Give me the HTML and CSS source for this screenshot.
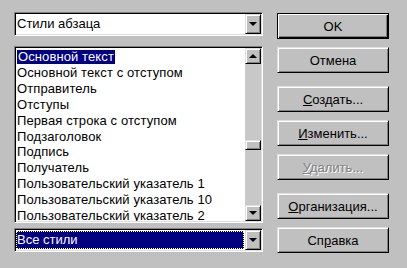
FILE: index.html
```html
<!DOCTYPE html>
<html lang="ru">

<head>
  <meta charset="UTF-8">
  <meta name="viewport" content="width=device-width, initial-scale=1.0">
  <title>Стили</title>
  <link rel="stylesheet" href="styles.css">
</head>

<body>

  <div class="dialog">
    <div class="leftCol">
      <div class="combo">
        <div class="comboText">Стили абзаца</div>
        <div class="dropBtn"><span class="arrowDown"></span></div>
      </div>

      <div class="listBox">
        <ul class="items">
          <li><span class="sel">Основной текст</span></li>
          <li>Основной текст с отступом</li>
          <li>Отправитель</li>
          <li>Отступы</li>
          <li>Первая строка с отступом</li>
          <li>Подзаголовок</li>
          <li>Подпись</li>
          <li>Получатель</li>
          <li>Пользовательский указатель 1</li>
          <li>Пользовательский указатель 10</li>
          <li>Пользовательский указатель 2</li>
        </ul>
        <div class="scrollBar">
          <div class="sbBtn"><span class="arrowUp"></span></div>
          <div class="track">
            <div class="thumb"></div>
          </div>
          <div class="sbBtn"><span class="arrowDown"></span></div>
        </div>
      </div>

      <div class="combo">
        <div class="comboText focused">Все стили</div>
        <div class="dropBtn"><span class="arrowDown"></span></div>
      </div>
    </div>

    <div class="buttons">
      <button class="btn default">OK</button>
      <button class="btn">Отмена</button>
      <button class="btn group"><u>С</u>оздать...</button>
      <button class="btn"><u>И</u>зменить...</button>
      <button class="btn disabled"><u>У</u>далить...</button>
      <button class="btn group"><u>О</u>рганизация...</button>
      <button class="btn"><span>Сп<u>р</u>авка</span></button>
    </div>
  </div>

</body>

</html>
```

FILE: styles.css
```css
body {
  margin: 0;
  width: 407px;
  height: 268px;
  overflow: hidden;
  background-color: #c0c0c0;
  font-family: "Liberation Sans", Arial, sans-serif;
  font-size: 13px;
  color: #000;
}

.dialog {
  display: flex;
  gap: 14px;
  padding: 12px 0 0 14px;
}

.leftCol {
  width: 249px;
  display: flex;
  flex-direction: column;
}

/* sunken 3d frame */
.combo,
.listBox {
  box-sizing: border-box;
  border: 1px solid;
  border-color: #808080 #fff #fff #808080;
  box-shadow: inset 1px 1px #000, inset -1px -1px #dfdfdf;
  background-color: #fff;
  padding: 1px;
  display: flex;
}

.combo {
  height: 24px;
}

.comboText {
  flex: 1;
  line-height: 20px;
  padding-left: 1px;
  white-space: nowrap;
}

.comboText.focused {
  margin: 1px 1px 1px 0;
  line-height: 16px;
  padding-left: 0;
  border: 1px dotted #fff;
  background: linear-gradient(#000080, #000080) padding-box, #000;
  color: #fff;
}

.listBox {
  height: 177px;
  margin-top: 10px;
  margin-bottom: 5px;
}

.items {
  flex: 1;
  list-style: none;
  margin: 0;
  padding: 1px 0 0 1px;
  line-height: 15.9px;
  overflow: hidden;
  white-space: nowrap;
}

.items li {
  letter-spacing: 0.1px;
}

.sel {
  display: inline-block;
  line-height: 14px;
  padding: 0 1px;
  background-color: #000080;
  color: #fff;
}

/* raised 3d frame */
.dropBtn,
.sbBtn,
.thumb,
.btn {
  box-sizing: border-box;
  border: 1px solid;
  border-color: #dfdfdf #000 #000 #dfdfdf;
  box-shadow: inset 1px 1px #fff, inset -1px -1px #808080;
  background-color: #c0c0c0;
}

.dropBtn,
.sbBtn {
  width: 16px;
  display: flex;
  align-items: center;
  justify-content: center;
}

.sbBtn {
  height: 16px;
}

.arrowDown,
.arrowUp {
  width: 0;
  height: 0;
  border-left: 4px solid transparent;
  border-right: 4px solid transparent;
}

.arrowDown {
  border-top: 4px solid #000;
}

.arrowUp {
  border-bottom: 4px solid #000;
}

.scrollBar {
  width: 16px;
  display: flex;
  flex-direction: column;
}

.track {
  flex: 1;
  background-color: #c8c8c8;
}

.thumb {
  height: 10px;
  margin-top: 76px;
}

.buttons {
  display: flex;
  flex-direction: column;
  gap: 8px;
  padding-top: 1px;
}

.btn {
  width: 112px;
  height: 26px;
  padding: 0;
  font-family: inherit;
  font-size: 13px;
  color: #000;
  text-align: center;
}

.btn.default {
  border-color: #000;
  box-shadow: inset 1px 1px #fff, inset -1px -1px #000, inset -2px -2px #808080;
}

.btn.group {
  margin-top: 5px;
}

.btn.disabled {
  color: #808080;
  text-shadow: 1px 1px #fff;
}
```
